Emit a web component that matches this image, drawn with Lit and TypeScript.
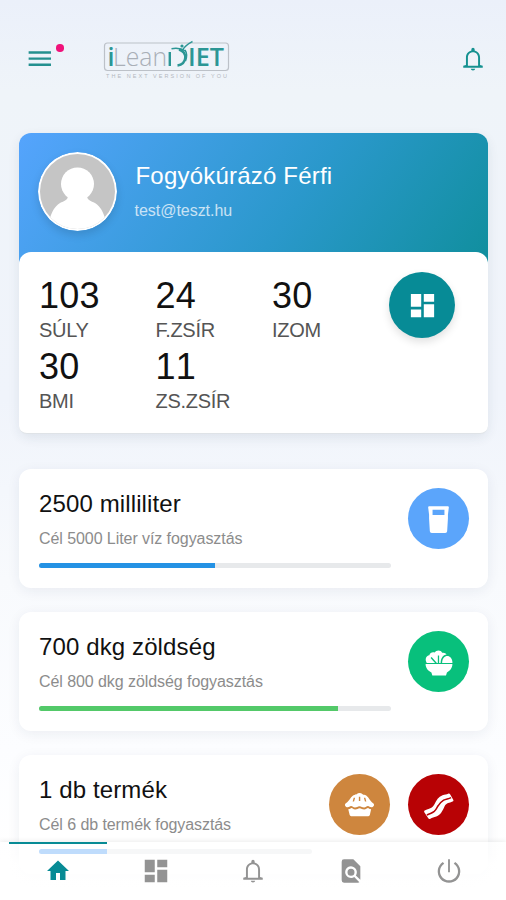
import { LitElement, html, css, svg } from "lit";
import { customElement, property } from "lit/decorators.js";

const paths: Record<string, unknown> = {
  menu: svg`<path d="M3 5.200h18.500v2H3zM3 10.300h18.500v2H3zM3 15.400h18.500v2H3z"/>`,
  home: svg`<path d="M10 21v-7h4v7h5.500v-9H23L12 1.500 1 12h3.500v9z"/>`,
  dash: svg`<path d="M3 13h8V3H3zm0 8h8v-6H3zm10 0h8V11h-8zm0-18v6h8V3z"/>`,
  bell: svg`<path d="M12 22.500c1.100 0 2-.7 2-1.500h-4c0 .8.900 1.500 2 1.500zM18.500 17.600v-7.100c0-3.100-2-5.700-5-6.400V3a1.500 1.500 0 0 0-3 0v1.100c-3 .7-5 3.300-5 6.400v7.100L3 18.200V20h18v-1.800zM16.700 18.200H7.300v-7.700C7.300 7.800 9.300 5.700 12 5.700s4.700 2.100 4.700 4.800z"/>`,
  find: svg`<path d="M20 19.590V8l-6-6H6a2 2 0 0 0-1.990 2L4 20a2 2 0 0 0 1.990 2H18c.45 0 .85-.15 1.190-.4l-4.430-4.430a5 5 0 1 1 1.410-1.410zM9 13a3 3 0 1 0 6 0 3 3 0 0 0-6 0z"/>`,
  power: svg`<path d="M11.200 2h1.600v11h-1.600zM17.300 4.300l-1.200 1.500a7.700 7.700 0 1 1-8.200 0L6.700 4.300a9.700 9.700 0 1 0 10.600 0z"/>`,
  glass: svg`<path fill-rule="evenodd" d="M4.800 2.500h14.400a.8.800 0 0 1 .8.900l-.7 5.600v3l-.6 9.800a1.500 1.500 0 0 1-1.500 1.400H6.800a1.500 1.500 0 0 1-1.500-1.400L4.700 12V9L4 3.400a.8.800 0 0 1 .8-.9zM7.400 5.200v4h9.200v-4z"/>`,
  salad: svg`<path d="M.5 13.800h23c0 3.500-2.200 5.900-4.700 7.200l-.8 2.500H6.300L5.500 21C2.700 19.700.5 17.300.5 13.800z"/><path d="M1.500 12.800C-.3 10 .8 6.800 3.700 6.300 4.200 3.900 6.600 3.100 8.200 3.900c1.600-2.500 5.400-2.400 6.500.2 1.500-.4 3 .2 3.800 1.500-3 .3-5 3.100-5.100 7.200h-1.300V6.500H11v6.300h-.8L5.700 7.700l-.9.800 3.800 4.300z"/><path d="M14.700 12.800c0-7.800 8.800-7.800 8.800 0z"/>`,
  pie: svg`<path fill-rule="evenodd" d="M1 11.500C3.500 10 5 6.500 7 5c1.300-.8 2-.2 2.700-.9 1.500-1.400 3.300-1.400 4.700 0 .7.700 1.700.1 2.800.9 2 1.500 3.500 5 5.800 6.500.8 1.300-.3 2.700-1.800 2.700-1.500 0-1.500-1-2.700-1s-1.500 1.200-3 1.200-2-1-3.500-1-2 1-3.500 1-1.800-1.200-3-1.200-1.500 1-2.700 1c-1.500 0-2.600-1.400-1.800-2.700zM7.500 6.800 6.700 9.600h1.100l.8-2.800zM11.500 6v3.200h1.100V6zM15.400 6.800l.8 2.800h1.100l-.8-2.800z"/><path d="M3.300 15.700c1.500 0 1.800-1 2.400-1 1.200 0 1.300 1.200 3 1.200s2-1 3.400-1 2 1 3.500 1 2-1.200 3-1.200c.6 0 1 1 2.400 1L20 20.200a1.200 1.200 0 0 1-1.200.9H5.600a1.200 1.200 0 0 1-1.200-.9z"/>`,
  bacon: svg`<path d="M-.6 18.200c-.4-.8 0-1.400.8-1.700C4.600 14.600 6 14.800 8 11.500 9.800 8 11.500 5 15 3.700c2-.8 3.500-.6 4.800-1.400.8-.4 1.400-.2 1.700.5l2.700 4.700c.4.800.1 1.300-.6 1.600-2.800 1.400-5 .7-6.900 4.200-1.800 3.800-3 7-7 8.500-2 .8-3.600 1-5.100 1.900-.8.500-1.400.3-1.800-.4z"/><path fill="none" stroke="#b80205" stroke-width="1.300" d="M1.600 20.600c3.400-1.700 4.200-1.300 6.300-3.100 2-1.800 2.100-3.200 3.500-5 1.500-2.100 2.300-3.200 4.600-4.600 2.100-1.300 3.900-.9 6.300-2.300"/>`,
};

@customElement("line-icon")
class LineIcon extends LitElement {
  @property() name = "";
  static styles = css`
    :host { display: block; width: 24px; height: 24px; }
    .glyph { display: block; width: 100%; height: 100%; fill: currentColor; overflow: visible; }
  `;
  render() {
    return html`<svg class="glyph" viewBox="0 0 24 24">${paths[this.name]}</svg>`;
  }
}

interface Goal {
  title: string;
  note: string;
  done: number;
  tone: string;
  badges: { icon: string; tone: string }[];
}

const goals: Goal[] = [
  { title: "2500 milliliter", note: "Cél 5000 Liter víz fogyasztás", done: 50, tone: "water", badges: [{ icon: "glass", tone: "sky" }] },
  { title: "700 dkg zöldség", note: "Cél 800 dkg zöldség fogyasztás", done: 85, tone: "leaf", badges: [{ icon: "salad", tone: "green" }] },
  { title: "1 db termék", note: "Cél 6 db termék fogyasztás", done: 25, tone: "soft", badges: [{ icon: "pie", tone: "crust" }, { icon: "bacon", tone: "red" }] },
];

const stats = [
  ["103", "SÚLY"],
  ["24", "F.ZSÍR"],
  ["30", "IZOM"],
  ["30", "BMI"],
  ["11", "ZS.ZSÍR"],
];

@customElement("app-root")
class AppRoot extends LitElement {
  static styles = css`
    :host {
      display: block; position: relative; height: 900px; overflow: hidden; box-sizing: border-box;
      font-family: "Liberation Sans", Arial, sans-serif; color: #111;
      background: linear-gradient(#ebf0fa 0, #eff4f9 90px, #f0f4fb 400px, #f8fafd 580px, #fcfdff 750px, #fff 860px);
    }
    .top { display: flex; align-items: center; height: 118px; padding: 0 20px 0 25px; box-sizing: border-box; }
    .menu { position: relative; color: #23908f; width: 27px; height: 30px; display: grid; place-items: center; }
    .menu line-icon { width: 29px; height: 29px; }
    .dot { position: absolute; left: 31px; top: 0; width: 7.500px; height: 7.500px; border-radius: 50%; background: #f0127a; }
    .logo { width: 128px; height: 42px; margin-left: 50px; }
    .alert { margin-left: auto; color: #149190; width: 26px; height: 26px; }
    .content { padding: 15px 18px 0 19px; }
    .profile { border-radius: 12px 12px 10px 10px; background: linear-gradient(125deg, #55a4fd 0, #2a98cb 58%, #118f9f 98%) 0 0 / 100% 135px no-repeat; box-shadow: 0 4px 12px rgba(30, 50, 80, .09); }
    .who { display: flex; height: 119px; align-items: center; padding-left: 19px; box-sizing: border-box; color: #fff; }
    .avatar { width: 79px; height: 79px; margin-top: -2px; border-radius: 50%; flex: none; box-shadow: 0 4px 8px rgba(0, 0, 0, .13); }
    .names { margin-left: 18.500px; }
    .name { font-size: 24px; line-height: 28px; letter-spacing: .2px; margin-top: -3px; white-space: nowrap; }
    .mail { font-size: 16px; line-height: 20px; margin-top: 11px; margin-left: -1px; opacity: .72; letter-spacing: -.03px; }
    .facts { display: flex; justify-content: space-between; height: 182px; box-sizing: border-box; padding: 20px 33px 0 20px; margin-bottom: -1px; border-radius: 12px 12px 8px 8px; background: #fff; border-bottom: 1px solid #dfe3e7; }
    .grid { display: grid; grid-template-columns: repeat(3, 116.500px); grid-auto-rows: 71px; align-content: start; }
    .num { font-size: 36px; line-height: 48px; letter-spacing: .2px; font-kerning: none; }
    .unit { font-size: 20px; line-height: 20px; color: #555; letter-spacing: -.3px; }
    .round { display: grid; place-items: center; border-radius: 50%; color: #fff; width: 61px; height: 61px; flex: none; }
    .round.big { width: 66px; height: 66px; background: #078b96; box-shadow: 0 4px 9px rgba(0, 0, 0, .12); }
    .round line-icon { width: 28px; height: 28px; }
    .round.big line-icon { width: 31px; height: 31px; }
    .round line-icon.pie, .round line-icon.glass { width: 31px; height: 31px; }
    .sky { background: #5ba5fb; }
    .green { background: #08c07c; }
    .crust { background: #ce863e; }
    .red { background: #b80205; }
    .goals { display: grid; gap: 24px; margin-top: 36px; }
    .card { display: flex; gap: 17px; height: 119px; box-sizing: border-box; padding: 19px 19px 0 20px; border-radius: 12px; background: #fff; box-shadow: 0 3px 13px rgba(30, 45, 80, .07); }
    .info { flex: 1; min-width: 0; }
    .title { font-size: 24px; line-height: 32px; letter-spacing: .12px; white-space: nowrap; }
    .note { font-size: 16px; line-height: 20px; margin-top: 9px; color: #8c8c8c; letter-spacing: -.07px; white-space: nowrap; }
    .track { height: 5px; margin-top: 14px; border-radius: 3px; background: #e7e9eb; overflow: hidden; }
    .fill { height: 100%; }
    .water { background: #2492e4; }
    .leaf { background: #53c969; }
    .soft { background: #4e9ff8; }
    .badges { display: flex; gap: 18px; }
    .nav { position: absolute; left: 0; right: 0; bottom: 0; height: 58px; padding: 0 8px 0 9px; box-sizing: border-box; display: grid; grid-template-columns: repeat(5, 1fr); background: linear-gradient(rgba(255, 255, 255, .64) 12px, rgba(255, 255, 255, .92) 22px); box-shadow: 0 -1px 5px rgba(0, 0, 0, .08); }
    .tab { display: grid; place-items: center; color: #939393; border-top: 2px solid transparent; padding-bottom: 2px; }
    .tab.on { color: #078b95; border-top-color: #078b95; }
    .tab line-icon { width: 28px; height: 28px; }
    .tab.on line-icon { width: 24px; height: 26px; }
    .tab line-icon.dash { width: 30px; height: 30px; }
    .tab line-icon.bell { width: 26px; height: 26px; }
  `;

  logo() {
    return html`<svg class="logo" viewBox="102 38 128 42">
      <rect x="104.500" y="43" width="124" height="27.500" rx="3" fill="none" stroke="#bcc1c8" stroke-width="1.200"/>
      <text x="107.500" y="66" font-family="Open Sans" font-weight="600" font-size="25" fill="#2c9695">i</text>
      <text x="113" y="66" font-family="Open Sans" font-weight="300" font-size="25" fill="#a9afb7" textLength="54" lengthAdjust="spacingAndGlyphs">Lean</text>
      <path d="M169.800 52v14M179 49.500c9 3 8 14.500-1.500 16" fill="none" stroke="#2c9695" stroke-width="2.400"/>
      <path d="M171.500 48.700c5-.8 10-.4 14 2.300M183 49.500c2-4 5-5.500 9.500-8M185 50c2 3 2 7 .5 11" fill="none" stroke="#2c9695" stroke-width="1.500"/>
      <circle cx="182" cy="46" r="1.600" fill="#2c9695"/>
      <text x="188" y="66" font-family="Open Sans" font-weight="600" font-size="25" fill="#2c9695" textLength="36" lengthAdjust="spacingAndGlyphs">IET</text>
      <text x="106" y="77.500" font-family="Liberation Sans" font-size="5.500" fill="#b4b8be" textLength="121">THE NEXT VERSION OF YOU</text>
    </svg>`;
  }

  render() {
    return html`
      <header class="top">
        <div class="menu"><line-icon name="menu"></line-icon><span class="dot"></span></div>
        ${this.logo()}
        <line-icon class="alert" name="bell"></line-icon>
      </header>
      <main class="content">
        <section class="profile">
          <div class="who">
            <svg class="avatar" viewBox="0 0 79 79">
              <defs><clipPath id="face"><circle cx="39.500" cy="39.500" r="37.500"/></clipPath></defs>
              <circle cx="39.500" cy="39.500" r="39.500" fill="#fff"/>
              <g clip-path="url(#face)">
                <path fill="#c5c5c5" d="M0 0h79v79H0z"/>
                <circle cx="39.500" cy="32" r="16.500" fill="#fff"/>
                <path fill="#fff" d="M30 44h19c0 4 4 5 8 7 6 4 8 9 10 15v13H12V66c2-6 4-11 10-15 4-2 8-3 8-7z"/>
              </g>
            </svg>
            <div class="names">
              <div class="name">Fogyókúrázó Férfi</div>
              <div class="mail">test@teszt.hu</div>
            </div>
          </div>
          <div class="facts">
            <div class="grid">
              ${stats.map(([n, u]) => html`<div><div class="num">${n}</div><div class="unit">${u}</div></div>`)}
            </div>
            <div class="round big"><line-icon name="dash"></line-icon></div>
          </div>
        </section>
        <section class="goals">
          ${goals.map(
            (g) => html`<article class="card">
              <div class="info">
                <div class="title">${g.title}</div>
                <div class="note">${g.note}</div>
                <div class="track"><div class="fill ${g.tone}" style="width:${g.done}%"></div></div>
              </div>
              <div class="badges">
                ${g.badges.map((b) => html`<div class="round ${b.tone}"><line-icon class=${b.icon} name=${b.icon}></line-icon></div>`)}
              </div>
            </article>`
          )}
        </section>
      </main>
      <nav class="nav">
        ${["home", "dash", "bell", "find", "power"].map(
          (n, i) => html`<div class="tab ${i === 0 ? "on" : ""}"><line-icon class=${n} name=${n}></line-icon></div>`
        )}
      </nav>
    `;
  }
}
